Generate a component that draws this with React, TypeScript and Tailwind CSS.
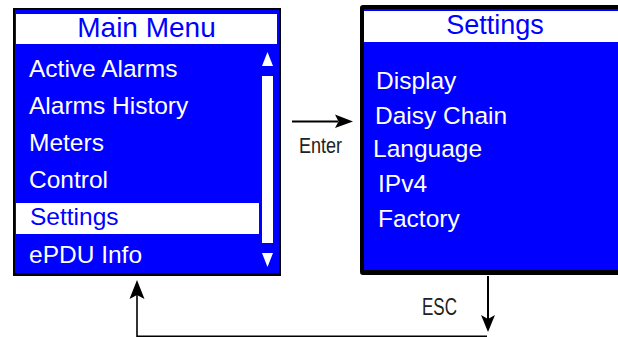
import React from 'react';

const mainItems = ['Active Alarms', 'Alarms History', 'Meters', 'Control', 'Settings', 'ePDU Info'];

// per-row tweaks so the lines sit where the LCD drew them
const settingsItems = [
  { label: 'Display', pl: 'pl-[12px]', h: 'h-[35px]' },
  { label: 'Daisy Chain', pl: 'pl-[11px]', h: 'h-[33px]' },
  { label: 'Language', pl: 'pl-[9px]', h: 'h-[35px]' },
  { label: 'IPv4', pl: 'pl-[14px]', h: 'h-[35px]' },
  { label: 'Factory', pl: 'pl-[14px]', h: 'h-[35px]' },
];

const ScrollArrow: React.FC<{ dir: 'up' | 'down' }> = ({ dir }) => (
  <svg width="11" height="14" viewBox="0 0 11 14" className="block">
    {dir === 'up' ? (
      <polygon points="5.5,0 11,14 0,14" fill="#ffffff" />
    ) : (
      <polygon points="0,0 11,0 5.5,14" fill="#ffffff" />
    )}
  </svg>
);

const MainMenu: React.FC = () => (
  <div className="ml-[13px] mt-[8px] h-[268px] w-[268px] shrink-0 border-2 border-b-[3px] border-black bg-[#0000ff] pt-[4px]">
    <div className="ml-[1px] mr-[2px] h-[30px] bg-white text-center text-[28px] leading-[27px] text-[#0000ff]">
      Main Menu
    </div>
    <div className="mt-[6px] flex">
      <div className="w-[247px]">
        {mainItems.map((item) =>
          item === 'Settings' ? (
            <div key={item} className="h-[38px] pt-[5px]">
              <div className="ml-[1px] h-[31px] w-[243px] bg-white pl-[14px] text-[24.5px] leading-[27px] text-[#0000ff]">
                {item}
              </div>
            </div>
          ) : (
            <div key={item} className="h-[37px] pl-[14px] text-[24.5px] leading-[37px] text-white">
              {item}
            </div>
          )
        )}
      </div>
      <div className="flex w-[11px] flex-col pt-[2px]">
        <ScrollArrow dir="up" />
        <div className="mt-[10px] h-[167px] w-[11px] bg-white" />
        <div className="mt-[10px]">
          <ScrollArrow dir="down" />
        </div>
      </div>
    </div>
  </div>
);

const SettingsMenu: React.FC = () => (
  <div className="mt-[5px] h-[270px] w-[270px] shrink-0 rounded-[3px] border-4 border-b-[5px] border-black bg-[#0000ff] pt-[2px]">
    <div className="h-[31px] bg-white text-center text-[27px] leading-[29px] text-[#0000ff]">Settings</div>
    <div className="mt-[21px]">
      {settingsItems.map((item) => (
        <div key={item.label} className={`${item.h} ${item.pl} text-[24.5px] leading-[35px] text-white`}>
          {item.label}
        </div>
      ))}
    </div>
  </div>
);

export default function App() {
  return (
    <div className="relative h-[337px] w-[618px] overflow-hidden bg-white font-['Liberation_Sans',Arial,sans-serif]">
      <div className="flex items-start">
        <MainMenu />

        {/* Enter arrow between the two screens */}
        <div className="flex w-[79px] shrink-0 flex-col items-start pt-[114px]">
          <svg width="62" height="14" viewBox="0 0 62 14" className="ml-[11px] block">
            <line x1="0" y1="7.5" x2="46" y2="7.5" stroke="#000" strokeWidth="2" />
            <path d="M61,7.5 L43,0.5 L46.5,7.5 L43,14 Z" fill="#000" />
          </svg>
          <span className="ml-[18px] mt-[7px] inline-block origin-left scale-x-[0.82] text-[22px] leading-[22px] text-[#222]">
            Enter
          </span>
        </div>

        <SettingsMenu />
      </div>

      {/* ESC return path */}
      <div className="relative h-[61px]">
        <svg width="618" height="61" viewBox="0 0 618 61" className="absolute inset-0">
          <line x1="488" y1="0" x2="488" y2="44" stroke="#000" strokeWidth="2" />
          <path d="M488,56 L481,39 L488,43 L495,39 Z" fill="#000" />
          <polyline points="487,60.2 137,60.2 137,18" fill="none" stroke="#000" strokeWidth="1.6" />
          <path d="M137,4 L144.5,23 L137,19 L129.5,23 Z" fill="#000" />
        </svg>
        <span className="absolute left-[422px] top-[20px] inline-block origin-left scale-x-[0.74] text-[23px] leading-[23px] text-[#222]">
          ESC
        </span>
      </div>
    </div>
  );
}
